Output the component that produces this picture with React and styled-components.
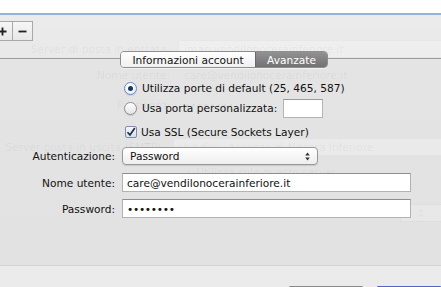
import React from 'react';
import styled, { createGlobalStyle } from 'styled-components';

const GlobalStyle = createGlobalStyle`
  html, body {
    margin: 0;
    padding: 0;
  }
  body {
    width: 441px;
    height: 287px;
    overflow: hidden;
    background: #fff;
    font-family: "DejaVu Sans", "Noto Sans", sans-serif;
    font-size: 10.6px;
    color: #111;
  }
`;

const Page = styled.div`
    display: flex;
    flex-direction: column;
    width: 441px;
    height: 287px;
`;

const TopStrip = styled.div`
    height: 13px;
    background: #fff;
    border-bottom: 2px solid #93b2dc;
    flex-shrink: 0;
`;

const Window = styled.div`
    flex: 1;
    display: grid;
    background: linear-gradient(to bottom, #ebebeb 0, #e9e9e9 44px, #e4e4e4 45px, #e2e2e2 100%);
`;

// window behind the sheet, seen through it
const Backdrop = styled.div`
    grid-area: 1 / 1;
    display: flex;
    flex-direction: column;
    color: rgba(0, 0, 0, 0.06);
    pointer-events: none;
`;

const GhostRow = styled.div`
    display: grid;
    grid-template-columns: ${({ $label }) => $label || 170}px 1fr;
    column-gap: 8px;
    align-items: center;
    height: 16px;
    margin-top: ${({ $top }) => $top}px;
`;

const GhostLabel = styled.div`
    text-align: right;
    white-space: nowrap;
`;

const GhostField = styled.div`
    height: 16px;
    line-height: 16px;
    padding-left: 5px;
    white-space: nowrap;
    overflow: hidden;
    background: ${({ $box }) => ($box ? 'rgba(255,255,255,0.25)' : 'transparent')};
    border: 1px solid ${({ $box }) => ($box ? 'rgba(0,0,0,0.03)' : 'transparent')};
    border-right: none;
`;

const GhostArrows = styled.div`
    align-self: flex-end;
    margin-top: 25px;
    width: 40px;
    height: 16px;
    line-height: 16px;
    text-align: center;
    border: 1px solid rgba(0, 0, 0, 0.04);
    border-right: none;
    background: rgba(255, 255, 255, 0.2);
`;

const Sheet = styled.div`
    grid-area: 1 / 1;
    display: flex;
    flex-direction: column;
`;

const Toolbar = styled.div`
    display: flex;
    padding-top: 6px;
    margin-left: -8px;
`;

const SquareButton = styled.div`
    width: 19px;
    height: 18px;
    display: flex;
    align-items: center;
    justify-content: center;
    background: linear-gradient(to bottom, #f6f6f6, #e8e8e8);
    border: 1px solid #a9a9a9;
    border-left: ${({ $first }) => ($first ? '1px solid #a9a9a9' : 'none')};
`;

const TabHeader = styled.div`
    margin-top: 10px;
    height: 17px;
    padding-left: 120px;
    display: flex;
    background: linear-gradient(to bottom, transparent 7px, #9c9c9c 7px, #9c9c9c 8px, transparent 8px);
`;

const Segmented = styled.div`
    display: flex;
    height: 17px;
    box-sizing: border-box;
    border: 1px solid #8e8e8e;
    border-radius: 4px;
    overflow: hidden;
    box-shadow: 0 1px 0 rgba(255, 255, 255, 0.5);
`;

const Segment = styled.div`
    width: ${({ $w }) => $w}px;
    display: flex;
    align-items: center;
    justify-content: center;
    color: ${({ $active }) => ($active ? '#fff' : '#111')};
    background: ${({ $active }) =>
        $active ? 'linear-gradient(to bottom, #929292, #727272)' : 'linear-gradient(to bottom, #ffffff, #f0f0f0)'};
    border-left: ${({ $active }) => ($active ? '1px solid #6a6a6a' : 'none')};
`;

const Options = styled.div`
    display: flex;
    flex-direction: column;
    padding-left: 124px;
    margin-top: 10px;
`;

const OptionRow = styled.div`
    display: flex;
    align-items: center;
    height: 20px;
    margin-top: ${({ $top }) => $top || 0}px;
    white-space: nowrap;
`;

const Radio = styled.div`
    width: 13px;
    height: 13px;
    box-sizing: border-box;
    border-radius: 50%;
    display: flex;
    align-items: center;
    justify-content: center;
    border: 1px solid ${({ $on }) => ($on ? '#6b8fc4' : '#8f8f8f')};
    background: ${({ $on }) =>
        $on ? 'radial-gradient(circle at 50% 40%, #ffffff 30%, #cfdff2 100%)' : 'linear-gradient(to bottom, #ffffff, #e4e4e4)'};
    box-shadow: 0 1px 1px rgba(0, 0, 0, 0.12);
    margin-right: 5px;
    flex-shrink: 0;

    &::after {
        content: '';
        display: ${({ $on }) => ($on ? 'block' : 'none')};
        width: 5px;
        height: 5px;
        border-radius: 50%;
        background: #1f3560;
    }
`;

const Check = styled.div`
    width: 12px;
    height: 12px;
    box-sizing: border-box;
    margin-left: 1px;
    margin-right: 4px;
    border: 1px solid #7f8ea6;
    border-radius: 2px;
    background: linear-gradient(to bottom, #f4f7fb, #d6e1ef);
    display: flex;
    align-items: center;
    justify-content: center;
    flex-shrink: 0;
`;

const SmallField = styled.div`
    width: 40px;
    height: 19px;
    margin-left: 6px;
    background: #fff;
    border: 1px solid #b4b4b4;
    border-top-color: #9a9a9a;
    box-sizing: border-box;
`;

const Form = styled.div`
    display: grid;
    grid-template-columns: 115px 289px;
    column-gap: 7px;
    align-items: center;
    margin-top: ${({ $top }) => $top}px;
`;

const Label = styled.div`
    text-align: right;
    white-space: nowrap;
`;

const Popup = styled.div`
    width: 196px;
    height: 18px;
    box-sizing: border-box;
    display: flex;
    align-items: center;
    justify-content: space-between;
    padding: 0 7px 0 7px;
    border: 1px solid #999;
    border-radius: 4px;
    background: linear-gradient(to bottom, #ffffff, #eeeeee);
    box-shadow: 0 1px 1px rgba(0, 0, 0, 0.12);
`;

const TextField = styled.div`
    height: 19px;
    box-sizing: border-box;
    display: flex;
    align-items: center;
    padding-left: 4px;
    background: #fff;
    border: 1px solid #b2b2b2;
    border-top-color: #8e8e8e;
    white-space: nowrap;
    letter-spacing: ${({ $dots }) => ($dots ? '-0.3px' : '0')};
`;

const BottomBar = styled.div`
    height: 21px;
    flex-shrink: 0;
    background: #ebebeb;
    border-top: 1px solid #d3d3d3;
    display: flex;
    justify-content: flex-end;
    align-items: flex-end;
    gap: 14px;
`;

const PeekButton = styled.div`
    width: ${({ $w }) => $w}px;
    height: 1px;
    border-radius: 3px 3px 0 0;
    background: ${({ $blue }) => ($blue ? '#5563c4' : '#8a8a8a')};
`;

const PlusIcon = () => (
    <svg width="9" height="9" viewBox="0 0 9 9">
        <path d="M4.5 0.5v8M0.5 4.5h8" stroke="#222" strokeWidth="1.8" />
    </svg>
);

const MinusIcon = () => (
    <svg width="9" height="9" viewBox="0 0 9 9">
        <path d="M0.5 4.5h8" stroke="#222" strokeWidth="1.8" />
    </svg>
);

const CheckMark = () => (
    <svg width="10" height="10" viewBox="0 0 10 10">
        <path d="M1.5 5.2 L4 8 L8.8 1" fill="none" stroke="#1c2a44" strokeWidth="1.7" />
    </svg>
);

const UpDown = () => (
    <svg width="5" height="9" viewBox="0 0 5 9">
        <path d="M2.5 0.5 L4.8 3.5 H0.2 Z M2.5 8.5 L4.8 5.5 H0.2 Z" fill="#333" />
    </svg>
);

export default function App() {
    return (
        <Page>
            <GlobalStyle />
            <TopStrip />
            <Window>
                <Backdrop>
                    <GhostRow $top={25}>
                        <GhostLabel>Server di posta in entrata:</GhostLabel>
                        <GhostField $box>imap.vendilonocerainferiore.it</GhostField>
                    </GhostRow>
                    <GhostRow $top={10}>
                        <GhostLabel>Nome utente:</GhostLabel>
                        <GhostField>care@vendilonocerainferiore.it</GhostField>
                    </GhostRow>
                    <GhostRow $top={14}>
                        <GhostLabel>Password:</GhostLabel>
                        <GhostField>••••••••</GhostField>
                    </GhostRow>
                    <GhostRow $top={26} $label={165}>
                        <GhostLabel>Server posta in uscita (SMTP):</GhostLabel>
                        <GhostField $box>Vendilo · Assenza di Nocera Inferiore</GhostField>
                    </GhostRow>
                    <GhostRow $top={9}>
                        <GhostLabel />
                        <GhostField>✓ Utilizza solo questo server</GhostField>
                    </GhostRow>
                    <GhostArrows>⇕</GhostArrows>
                </Backdrop>

                <Sheet>
                    <Toolbar>
                        <SquareButton $first><PlusIcon /></SquareButton>
                        <SquareButton><MinusIcon /></SquareButton>
                    </Toolbar>

                    <TabHeader>
                        <Segmented>
                            <Segment $w={134}>Informazioni account</Segment>
                            <Segment $w={71} $active>Avanzate</Segment>
                        </Segmented>
                    </TabHeader>

                    <Options>
                        <OptionRow>
                            <Radio $on />
                            Utilizza porte di default (25, 465, 587)
                        </OptionRow>
                        <OptionRow>
                            <Radio />
                            Usa porta personalizzata:
                            <SmallField />
                        </OptionRow>
                        <OptionRow $top={4}>
                            <Check><CheckMark /></Check>
                            Usa SSL (Secure Sockets Layer)
                        </OptionRow>
                    </Options>

                    <Form $top={5}>
                        <Label>Autenticazione:</Label>
                        <Popup>
                            <span>Password</span>
                            <UpDown />
                        </Popup>
                    </Form>
                    <Form $top={8}>
                        <Label>Nome utente:</Label>
                        <TextField>care@vendilonocerainferiore.it</TextField>
                    </Form>
                    <Form $top={7}>
                        <Label>Password:</Label>
                        <TextField $dots>••••••••</TextField>
                    </Form>
                </Sheet>
            </Window>
            <BottomBar>
                <PeekButton $w={74} />
                <PeekButton $w={64} $blue />
            </BottomBar>
        </Page>
    );
}
